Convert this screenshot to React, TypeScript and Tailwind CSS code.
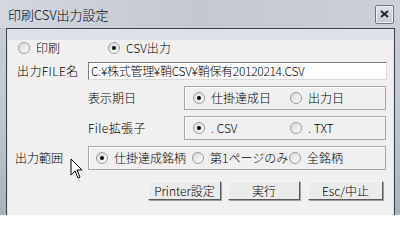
import React from "react";

const FONT = {
  fontFamily: '"Noto Sans CJK JP", "Liberation Sans", sans-serif',
  fontWeight: 300,
};

type RadioProps = { label: string; checked?: boolean; className?: string };

const Radio = ({ label, checked, className }: RadioProps) => (
  <div className={`flex items-center ${className ?? ""}`}>
    <span className="flex h-[12px] w-[12px] shrink-0 items-center justify-center rounded-full border border-[#9a9a9a] bg-gradient-to-br from-[#d8d8d8] to-white">
      {checked && <span className="h-[4px] w-[4px] rounded-full bg-black" />}
    </span>
    <span className="ml-[6px] whitespace-nowrap text-[12px] leading-none text-black">{label}</span>
  </div>
);

const GroupBox = ({ className, children }: { className: string; children: React.ReactNode }) => (
  <div className={`flex h-[24px] items-center border border-[#a6a6a6] shadow-[inset_1px_1px_0_#ffffff] ${className}`}>
    {children}
  </div>
);

const Button = ({ label, className }: { label: string; className: string }) => (
  <button className={`flex h-[19px] items-center justify-center border border-t-[#f4f4f4] border-l-[#f4f4f4] border-r-[#5a5a5a] border-b-[#5a5a5a] bg-[#ebebeb] text-[12px] leading-none text-black shadow-[1px_1px_0_#a0a0a0] ${className}`}>
    {label}
  </button>
);

const Cursor = () => (
  <svg width="13" height="22" viewBox="0 0 13 22" className="absolute left-[62px] top-[118px]">
    <path d="M1 1 L1 17 L5 13 L8 20 L10 19 L7 12 L12 12 Z" fill="#ffffff" stroke="#000000" strokeWidth="1" strokeLinejoin="round" />
  </svg>
);

export default function App() {
  return (
    <div className="h-[215px] w-[400px] overflow-hidden bg-gradient-to-b from-[#c9ced8] via-[#c2c8d2] to-[#aab1bf]" style={FONT}>
      {/* title bar */}
      <div className="flex h-[28px] items-center justify-between bg-gradient-to-r from-[#d3d7de] via-[#c3c8d1] to-[#cbd0d9] pl-[8px] pr-[6px]">
        <span className="text-[13px] leading-none text-black">印刷CSV出力設定</span>
        <div className="flex h-[19px] w-[19px] items-center justify-center rounded-[2px] border border-[#6f7580] bg-gradient-to-b from-[#dfe2e8] to-[#c4c9d2] shadow-[inset_0_0_0_1px_#eef0f4]">
          <svg width="9" height="8" viewBox="0 0 9 8">
            <path d="M1 1 L8 7 M8 1 L1 7" stroke="#1f2430" strokeWidth="2" />
          </svg>
        </div>
      </div>

      {/* client area */}
      <div className="ml-[6px] w-[389px] border border-[#3d4047] bg-[#dfe3e9] p-px">
        <div className="relative h-[178px] w-full bg-[#f0f0f0]">
          {/* row 1 */}
          <div className="mt-[10px] flex h-[16px] items-center pl-[10px]">
            <Radio label="印刷" className="w-[90px]" />
            <Radio label="CSV出力" checked />
          </div>

          {/* row 2 */}
          <div className="mt-[6px] flex h-[18px] items-center">
            <span className="w-[80px] pl-[9px] text-[12px] leading-none tracking-[0.4px] text-black">出力FILE名</span>
            <div className="flex h-[18px] w-[299px] items-center border border-[#7a7a7a] border-r-[#d8d8d8] border-b-[#d8d8d8] bg-white pl-[2px]">
              <span className="whitespace-nowrap text-[12px] leading-none tracking-[-0.3px] text-black">
                C:¥株式管理¥鞘CSV¥鞘保有20120214.CSV
              </span>
            </div>
          </div>

          {/* row 3 */}
          <div className="mt-[6px] flex h-[24px] items-center">
            <span className="w-[176px] pl-[80px] text-[12px] leading-none text-black">表示期日</span>
            <GroupBox className="w-[202px] pl-[8px]">
              <Radio label="仕掛達成日" checked className="w-[97px]" />
              <Radio label="出力日" />
            </GroupBox>
          </div>

          {/* row 4 */}
          <div className="mt-[6px] flex h-[24px] items-center">
            <span className="w-[176px] pl-[80px] text-[12px] leading-none tracking-[0.4px] text-black">File拡張子</span>
            <GroupBox className="w-[202px] pl-[8px]">
              <Radio label=". CSV" checked className="w-[97px]" />
              <Radio label=". TXT" />
            </GroupBox>
          </div>

          {/* row 5 */}
          <div className="mt-[6px] flex h-[24px] items-center">
            <span className="w-[80px] pl-[7px] text-[12px] leading-none text-black">出力範囲</span>
            <GroupBox className="w-[298px] pl-[7px]">
              <Radio label="仕掛達成銘柄" checked className="w-[96px]" />
              <Radio label="第1ページのみ" className="w-[97px]" />
              <Radio label="全銘柄" />
            </GroupBox>
          </div>

          {/* buttons */}
          <div className="mt-[11px] flex pl-[140px]">
            <Button label="Printer設定" className="w-[73px]" />
            <Button label="実行" className="ml-[7px] w-[72px]" />
            <Button label="Esc/中止" className="ml-[8px] w-[75px]" />
          </div>

          <Cursor />
        </div>
      </div>
      <div className="ml-[3px] mt-[2px] h-[2px] w-[394px] bg-[#3d4047]" />
    </div>
  );
}
